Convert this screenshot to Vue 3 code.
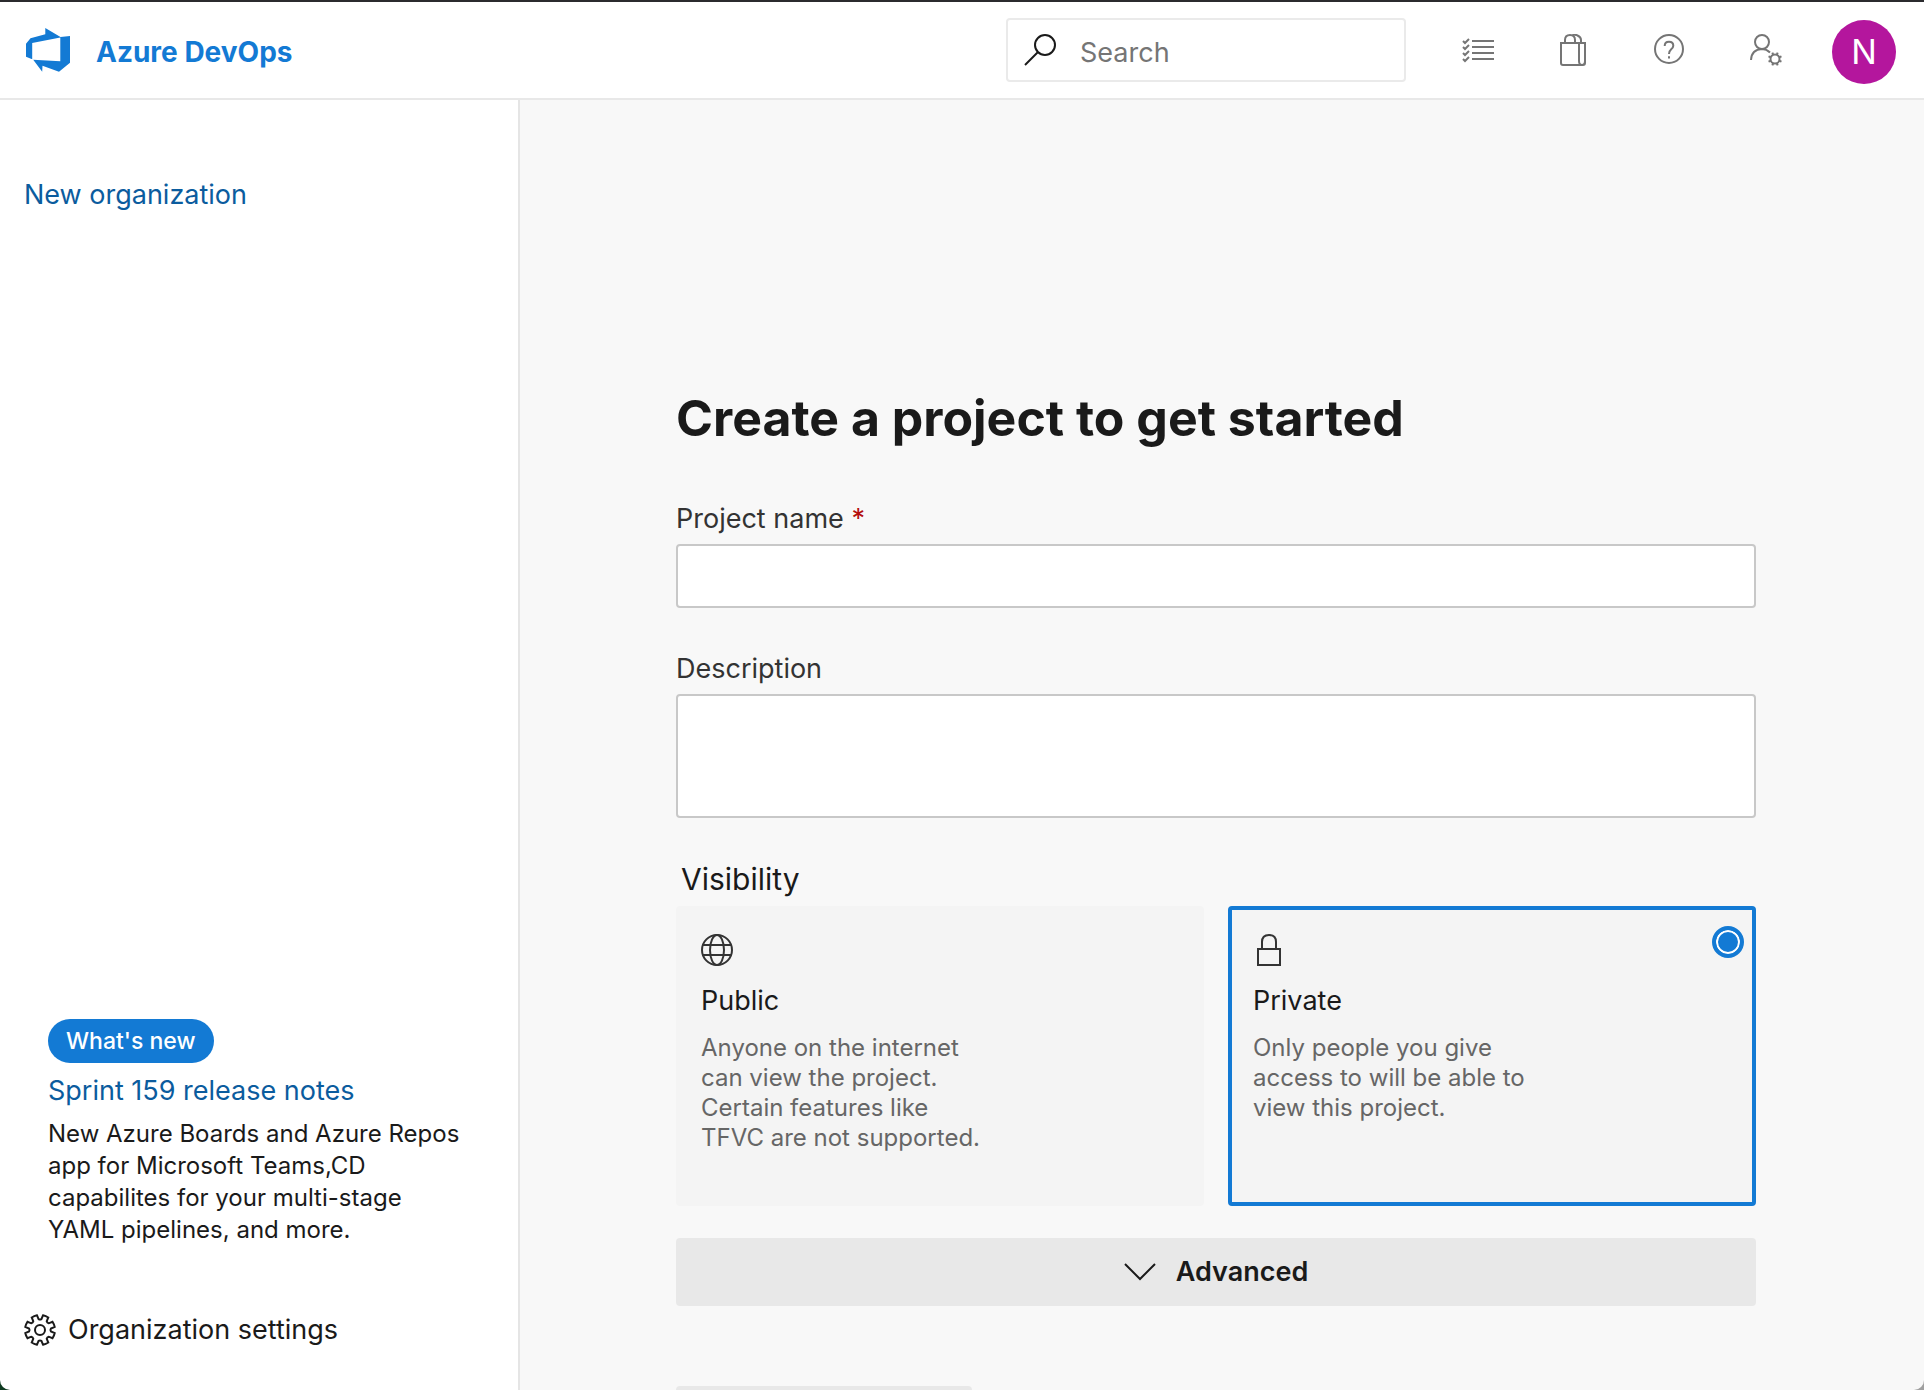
<script setup>
import { ref } from 'vue'

const search = ref('')
const projectName = ref('')
const description = ref('')
const visibility = ref('private')

const checkRows = [7, 13, 19, 25]
const spokes = [0, 45, 90, 135, 180, 225, 270, 315]

function gearPath(center, outer, inner, teeth) {
  const step = 360 / teeth
  const point = (radius, degrees) => {
    const angle = (degrees * Math.PI) / 180
    return `${(center + radius * Math.sin(angle)).toFixed(2)} ${(center - radius * Math.cos(angle)).toFixed(2)}`
  }
  let path = ''
  for (let i = 0; i < teeth; i++) {
    const mid = step / 2 + i * step
    path += `${i ? 'L' : 'M'}${point(inner, mid - 15)}L${point(outer, mid - 11)}`
    path += `A${outer} ${outer} 0 0 1 ${point(outer, mid + 11)}L${point(inner, mid + 15)}`
    path += `Q${point(inner - 1, mid + step / 2)} ${point(inner, mid + step - 15)}`
  }
  return path + 'Z'
}

const gear = gearPath(16, 15, 11, 8)
</script>

<template>
  <div class="app">
    <header class="header">
      <a class="brand" href="#">
        <svg class="logo" viewBox="0 0 44 44" aria-hidden="true">
          <path fill="currentColor" fill-rule="evenodd" d="M19.3 0L34.5 9L44 8V34.700L33 43.700L16.500 37.700L16.200 43.700L7.200 31.700L34.300 33.300V9.500L6.200 15V31.300L0 28.700V15.700L4.500 10.300L19.300 6.300Z" />
        </svg>
        <span>Azure DevOps</span>
      </a>

      <label class="search">
        <svg class="icon" viewBox="0 0 32 32" aria-hidden="true">
          <circle cx="21" cy="11" r="10" />
          <path d="M14 18L1 31" />
        </svg>
        <input v-model="search" type="search" placeholder="Search" aria-label="Search" />
      </label>

      <nav class="actions">
        <button type="button">
          <svg class="icon" viewBox="0 0 32 32" aria-hidden="true">
            <path v-for="y in checkRows" :key="y" :d="`M10 ${y}H32M1 ${y}l2 2l4-4`" />
          </svg>
        </button>
        <button type="button">
          <svg class="icon" viewBox="0 0 32 32" aria-hidden="true">
            <path d="M3 9H27V29Q27 31 25 31H5Q3 31 3 29ZM21 9V27Q21 31 24 31M27 27Q27 31 24 31M7 9V6Q7 1 12 1Q17 1 17 6V9M14 1.500Q17 0 19.500 1.500Q23 3 23 6V9" />
          </svg>
        </button>
        <button type="button">
          <svg class="icon" viewBox="0 0 32 32" aria-hidden="true">
            <circle cx="15" cy="15" r="14" />
            <path d="M10.700 12Q10.700 7.800 15 7.800Q19.300 7.800 19.300 11.700Q19.300 13.500 17 15.500Q15 17.200 15 20M15 22.300V24.600" />
          </svg>
        </button>
        <button type="button">
          <svg class="icon" viewBox="0 0 32 32" aria-hidden="true">
            <circle cx="12" cy="8" r="7" />
            <path d="M1 26Q1.500 15.500 12 15Q16.500 15 20 18.500" />
            <circle cx="25" cy="25" r="4.500" />
            <path v-for="a in spokes" :key="a" d="M25 20.500V18" :transform="`rotate(${a + 22.5} 25 25)`" />
          </svg>
        </button>
      </nav>
      <button class="avatar" type="button">N</button>
    </header>

    <div class="body">
      <aside class="sidebar">
        <a class="link" href="#">New organization</a>
        <section class="news">
          <span class="pill">What's new</span>
          <a class="link" href="#">Sprint 159 release notes</a>
          <p>New Azure Boards and Azure Repos app for Microsoft Teams,CD capabilites for your multi-stage YAML pipelines, and more.</p>
        </section>
        <a class="settings" href="#">
          <svg class="icon" viewBox="0 0 32 32" aria-hidden="true">
            <path :d="gear" />
            <circle cx="16" cy="16" r="5" />
          </svg>
          <span>Organization settings</span>
        </a>
      </aside>

      <main class="main">
        <form class="form" @submit.prevent>
          <h1>Create a project to get started</h1>
          <div class="field">
            <label for="project-name">Project name <span class="required">*</span></label>
            <input id="project-name" v-model="projectName" type="text" />
          </div>
          <div class="field">
            <label for="description">Description</label>
            <textarea id="description" v-model="description"></textarea>
          </div>
          <h2 id="visibility-title">Visibility</h2>
          <div class="cards" role="radiogroup" aria-labelledby="visibility-title">
            <label class="card" :class="{ selected: visibility === 'public' }">
              <input v-model="visibility" type="radio" name="visibility" value="public" />
              <svg class="icon" viewBox="0 0 32 32" aria-hidden="true">
                <circle cx="16" cy="16" r="15" />
                <ellipse cx="16" cy="16" rx="7" ry="15" />
                <path d="M2 11H30M2 21H30" />
              </svg>
              <span class="card-title">Public</span>
              <span class="card-text">Anyone on the internet can view the project. Certain features like TFVC are not supported.</span>
            </label>
            <label class="card" :class="{ selected: visibility === 'private' }">
              <input v-model="visibility" type="radio" name="visibility" value="private" />
              <svg class="icon" viewBox="0 0 32 32" aria-hidden="true">
                <path d="M5 15H27V31H5ZM9 15V8Q9 1 16 1Q23 1 23 8V15" />
              </svg>
              <span class="card-title">Private</span>
              <span class="card-text">Only people you give access to will be able to view this project.</span>
            </label>
          </div>
          <button class="advanced" type="button">
            <svg class="icon" viewBox="0 0 32 32" aria-hidden="true">
              <path d="M1 8L16 23L31 8" />
            </svg>
            <span>Advanced</span>
          </button>
          <button class="submit" type="submit"></button>
        </form>
      </main>
    </div>
  </div>
</template>

<style>
body {
  margin: 0;
}
</style>

<style scoped>
* {
  box-sizing: border-box;
}

.app {
  display: flex;
  flex-direction: column;
  height: 100vh;
  overflow: hidden;
  background: linear-gradient(90deg, #0e3a20 50%, #a0a0a0 50%);
  color: #1a1a1a;
  font-family: Inter, "Liberation Sans", sans-serif;
  font-size: 27px;
  line-height: 36px;
}

a {
  text-decoration: none;
}

button,
input,
textarea {
  margin: 0;
  padding: 0;
  border: 0;
  font: inherit;
  color: inherit;
}

button {
  background: none;
}

.icon {
  display: block;
  flex: none;
  width: 32px;
  height: 32px;
  fill: none;
  stroke: currentColor;
  stroke-width: 2;
}

.header {
  display: flex;
  flex: none;
  align-items: center;
  height: 100px;
  padding: 0 28px 0 26px;
  border-top: 2px solid #2b2b2e;
  border-bottom: 2px solid #e8e8e8;
  background: #fff;
}

.brand {
  display: flex;
  align-items: center;
  gap: 26px;
  margin-right: auto;
  color: #137ad4;
  font-size: 28px;
  font-weight: 700;
}

.brand span {
  padding-top: 4px;
}

.logo {
  width: 44px;
  height: 44px;
}

.search {
  display: flex;
  align-items: center;
  gap: 24px;
  width: 400px;
  height: 64px;
  padding: 0 16px;
  border: 2px solid #eaeaea;
  border-radius: 4px;
}

.search input {
  flex: 1;
  min-width: 0;
  height: 40px;
  padding-top: 4px;
  background: none;
  outline: none;
}

.search input::placeholder {
  color: #757575;
  opacity: 1;
}

.actions {
  display: flex;
  gap: 64px;
  margin: 0 50px 0 56px;
  color: #757575;
}

.avatar {
  width: 64px;
  height: 64px;
  margin-top: 4px;
  border-radius: 50%;
  background: #b4169d;
  color: #fff;
  font-size: 34px;
}

.body {
  display: flex;
  flex: 1;
  min-height: 0;
}

.sidebar {
  display: flex;
  flex: none;
  flex-direction: column;
  width: 520px;
  padding: 77px 24px 42px;
  border-right: 2px solid #e5e5e5;
  border-bottom-left-radius: 10px;
  background: #fff;
}

.link {
  color: #0b5c9e;
}

.news {
  display: flex;
  flex-direction: column;
  align-items: flex-start;
  margin-top: auto;
  padding: 0 24px;
}

.pill {
  margin-bottom: 10px;
  padding: 4px 18px;
  border-radius: 22px;
  background: #137ad4;
  color: #fff;
  font-size: 23px;
  font-weight: 500;
}

.news p {
  margin: 9px 0 66px;
  font-size: 24px;
  line-height: 32px;
}

.settings {
  display: flex;
  align-items: center;
  gap: 12px;
  color: #1a1a1a;
}

.main {
  flex: 1;
  min-width: 0;
  overflow: hidden;
  padding: 286px 168px 0 156px;
  border-bottom-right-radius: 10px;
  background: #f8f8f8;
}

h1 {
  margin: 0 0 50px;
  font-size: 50px;
  font-weight: 700;
  line-height: 64px;
}

.field {
  display: flex;
  flex-direction: column;
  gap: 6px;
  margin-bottom: 42px;
}

.field label {
  color: #333;
  line-height: 38px;
}

.required {
  color: #b30e0e;
}

.field input,
.field textarea {
  width: 100%;
  height: 64px;
  padding: 0 16px;
  border: 2px solid #c8c8c8;
  border-radius: 4px;
  background: #fff;
}

.field textarea {
  height: 124px;
  resize: none;
}

h2 {
  margin: 0 5px 8px;
  font-size: 30px;
  font-weight: 400;
  line-height: 38px;
}

.cards {
  display: flex;
  gap: 24px;
}

.card {
  position: relative;
  display: flex;
  flex: 1;
  flex-direction: column;
  height: 300px;
  padding: 24px 21px;
  border: 4px solid #f4f4f4;
  border-radius: 4px;
  background: #f4f4f4;
}

.card .icon {
  color: #333;
}

.card.selected {
  border-color: #137ad4;
}

.card input {
  position: absolute;
  top: 16px;
  right: 8px;
  width: 32px;
  height: 32px;
  appearance: none;
}

.card.selected input {
  border: 4px solid #137ad4;
  border-radius: 50%;
  background: #137ad4;
  box-shadow: inset 0 0 0 2px #fff;
}

.card-title {
  margin: 17px 0 14px;
}

.card-text {
  max-width: 288px;
  color: #666;
  font-size: 24px;
  line-height: 30px;
}

.advanced {
  display: flex;
  align-items: center;
  justify-content: center;
  gap: 20px;
  width: 100%;
  height: 68px;
  margin: 32px 0 80px;
  border-radius: 4px;
  background: #e8e8e8;
  font-weight: 600;
}

.submit {
  width: 296px;
  height: 64px;
  border-radius: 4px;
  background: #e8e8e8;
}
</style>
